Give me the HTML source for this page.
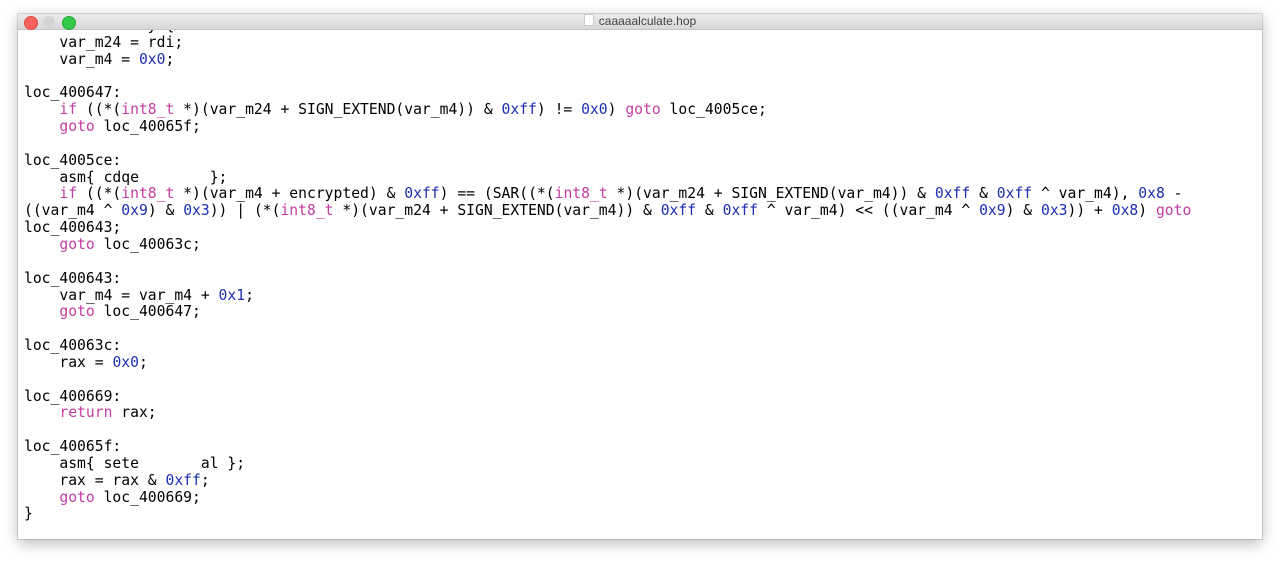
<!DOCTYPE html>
<html><head><style>
html,body{margin:0;padding:0;width:1280px;height:561px;background:#fff;overflow:hidden}
.win{position:absolute;left:18px;top:14px;width:1244px;height:525px;background:#fff;box-shadow:0 4px 14px rgba(0,0,0,.28),0 0 0 1px rgba(0,0,0,.12);overflow:hidden}
.tb{position:absolute;left:0;top:0;width:100%;height:15px;background:linear-gradient(#ebebeb,#d8d8d8);border-bottom:1px solid #c4c4c4;z-index:2}
.dot{position:absolute;top:2px;width:12px;height:12px;border-radius:50%}
.title{position:absolute;left:0;right:0;top:0px;text-align:center;font:12px "Liberation Sans",sans-serif;color:#444}
.doc{display:inline-block;width:8px;height:10px;background:#fff;border:1px solid #ccc;vertical-align:-1px;margin-right:5px}
pre{position:absolute;left:6px;top:4px;margin:0;font:14.7px/16.85px "DejaVu Sans Mono",monospace;color:#000}
.k{color:#c43da2}.n{color:#1b2fb0}
</style></head><body>
<div class="win">
<div class="tb">
<div class="dot" style="left:6px;background:#fc605b;border:0.5px solid #de4a44"></div>
<div class="dot" style="left:25px;background:#d4d4d4"></div>
<div class="dot" style="left:44px;background:#34c84a;border:0.5px solid #27aa35"></div>
<div class="title"><span class="doc"></span>caaaaalculate.hop</div>
</div>
<pre>function verify {
    var_m24 = rdi;
    var_m4 = <span class="n">0x0</span>;

loc_400647:
    <span class="k">if</span> ((*(<span class="k">int8_t</span> *)(var_m24 + SIGN_EXTEND(var_m4)) &amp; <span class="n">0xff</span>) != <span class="n">0x0</span>) <span class="k">goto</span> loc_4005ce;
    <span class="k">goto</span> loc_40065f;

loc_4005ce:
    asm{ cdqe        };
    <span class="k">if</span> ((*(<span class="k">int8_t</span> *)(var_m4 + encrypted) &amp; <span class="n">0xff</span>) == (SAR((*(<span class="k">int8_t</span> *)(var_m24 + SIGN_EXTEND(var_m4)) &amp; <span class="n">0xff</span> &amp; <span class="n">0xff</span> ^ var_m4), <span class="n">0x8</span> -
((var_m4 ^ <span class="n">0x9</span>) &amp; <span class="n">0x3</span>)) | (*(<span class="k">int8_t</span> *)(var_m24 + SIGN_EXTEND(var_m4)) &amp; <span class="n">0xff</span> &amp; <span class="n">0xff</span> ^ var_m4) &lt;&lt; ((var_m4 ^ <span class="n">0x9</span>) &amp; <span class="n">0x3</span>)) + <span class="n">0x8</span>) <span class="k">goto</span>
loc_400643;
    <span class="k">goto</span> loc_40063c;

loc_400643:
    var_m4 = var_m4 + <span class="n">0x1</span>;
    <span class="k">goto</span> loc_400647;

loc_40063c:
    rax = <span class="n">0x0</span>;

loc_400669:
    <span class="k">return</span> rax;

loc_40065f:
    asm{ sete       al };
    rax = rax &amp; <span class="n">0xff</span>;
    <span class="k">goto</span> loc_400669;
}</pre>
</div>
</body></html>
